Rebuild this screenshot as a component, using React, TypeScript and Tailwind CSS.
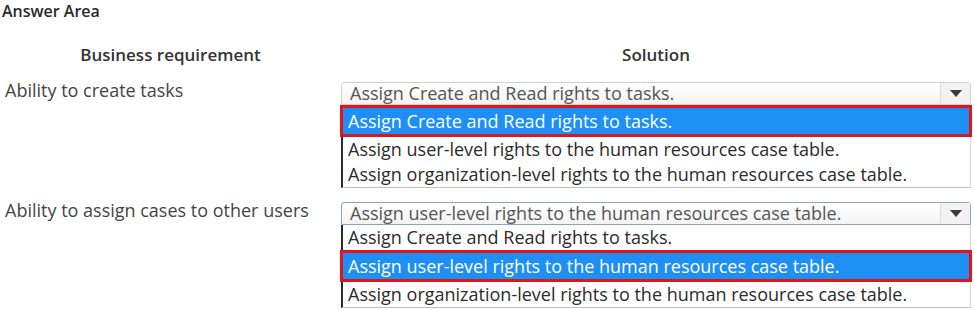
import React from 'react';

interface Question {
    label: string;
    current: string;
    selected: number;
    focused: boolean;
}

const options = [
    'Assign Create and Read rights to tasks.',
    'Assign user-level rights to the human resources case table.',
    'Assign organization-level rights to the human resources case table.',
];

const questions: Question[] = [
    { label: 'Ability to create tasks', current: options[0], selected: 0, focused: false },
    { label: 'Ability to assign cases to other users', current: options[1], selected: 1, focused: true },
];

const Caret = () => (
    <svg width="12" height="8" viewBox="0 0 12 8">
        <path d="M0 0 L12 0 L6 7 Z" fill="#3a3a3a" />
    </svg>
);

const Dropdown: React.FC<{ q: Question }> = ({ q }) => (
    <div className="w-[630px]">
        {/* closed select */}
        <div
            className={`flex h-[23px] items-stretch rounded-t-[3px] border bg-gradient-to-b from-white to-[#f3f3f3] ${q.focused ? 'border-[#8aa4c8]' : 'border-[#cfcfcf]'}`}
        >
            <div className="flex-1 whitespace-nowrap pl-[8px] text-[18px] leading-[21px] text-[#555]">{q.current}</div>
            <div className="flex w-[30px] items-center justify-center border-l border-[#dedede] bg-[#f2f2f2]">
                <Caret />
            </div>
        </div>
        {/* open list */}
        <div className="border-b border-r border-l-2 border-b-[#bdbdbd] border-r-[#d8d8d8] border-l-[#2a2a2a] bg-white">
            {options.map((opt, i) =>
                i === q.selected ? (
                    <div key={i} className="-ml-[3px] -mr-[2px] border-[3px] border-[#e0141b] bg-[#1e8ff5] px-[5px] text-[18px] leading-[26px] text-white">
                        {opt}
                    </div>
                ) : (
                    <div key={i} className="h-[25px] pl-[5px] text-[18px] leading-[25px] text-[#2b2b2b]">
                        {opt}
                    </div>
                )
            )}
        </div>
    </div>
);

const App: React.FC = () => {
    return (
        <div className="h-[310px] w-[974px] overflow-hidden bg-white text-[#333]" style={{ fontFamily: '"Open Sans", "Noto Sans", sans-serif' }}>
            <div className="pl-[2px] pt-[1px] text-[16px] font-semibold leading-[20px] text-[#2a2a2a]">Answer Area</div>

            <div className="mt-[23px] grid grid-cols-[341px_630px]">
                <div className="text-center text-[17px] font-semibold leading-[22px] text-[#333]">Business requirement</div>
                <div className="text-center text-[17px] font-semibold leading-[22px] text-[#333]">Solution</div>
            </div>

            <div className="mt-[16px] flex flex-col gap-[14px]">
                {questions.map((q, i) => (
                    <div key={i} className="grid grid-cols-[341px_630px]">
                        <div className="pl-[5px] text-[18px] leading-[16px] text-[#444]">{q.label}</div>
                        <Dropdown q={q} />
                    </div>
                ))}
            </div>
        </div>
    );
};

export default App;
